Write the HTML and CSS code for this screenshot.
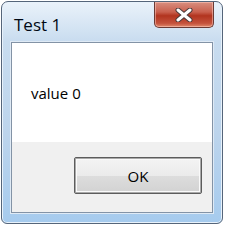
FILE: index.html
```html
<!DOCTYPE html>
<html lang="en">
<head>
    <meta charset="UTF-8">
    <title>Test 1</title>
    <link rel="stylesheet" href="styles.css">
</head>
<body>
    <div class="window">
        <div class="titlebar">
            <span class="title">Test 1</span>
            <button class="close" aria-label="Close">
                <svg width="20" height="14" viewBox="0 0 20 14">
                    <path d="M4 2 L16 12 M16 2 L4 12" stroke="#4a3a3a" stroke-width="5" stroke-linecap="round"/>
                    <path d="M4 2 L16 12 M16 2 L4 12" stroke="#ffffff" stroke-width="3" stroke-linecap="round"/>
                </svg>
            </button>
        </div>
        <div class="client">
            <div class="message">value 0</div>
            <div class="footer">
                <button class="ok">OK</button>
            </div>
        </div>
    </div>
</body>
</html>
```

FILE: styles.css
```css
body {
    margin: 0;
    background: #ffffff;
    font-family: "Open Sans", "Noto Sans", sans-serif;
}
.window {
    box-sizing: border-box;
    width: 222px;
    height: 223px;
    margin: 1px 0 0 1px;
    border: 1px solid #55657a;
    border-radius: 7px 7px 6px 6px;
    background: linear-gradient(to bottom, #eaf2fa 0%, #c8dcef 18%, #bcd4ec 60%, #a6cbee 100%);
    box-shadow: inset 0 0 0 1px #e8f2fb;
    padding: 0 9px 10px 9px;
    display: flex;
    flex-direction: column;
}
.titlebar {
    height: 40px;
    display: flex;
    justify-content: space-between;
    align-items: flex-start;
}
.title {
    margin: 11px 0 0 3px;
    font-size: 17px;
    color: #000814;
}
.close {
    width: 60px;
    height: 26px;
    margin: 0 -1px 0 0;
    padding: 0;
    border: 1px solid #6b3a34;
    border-top: none;
    border-radius: 0 0 5px 5px;
    background: linear-gradient(to bottom, #d98f80 0%, #c9604e 40%, #b2341f 55%, #c4523c 85%, #e08a6c 100%);
    box-shadow: inset 0 0 0 1px rgba(255, 210, 200, 0.5);
    display: flex;
    align-items: center;
    justify-content: center;
}
.client {
    flex: 1;
    border: 1px solid #8393a6;
    box-shadow: 0 0 0 1px #dfeaf5;
    background: #ffffff;
    display: flex;
    flex-direction: column;
}
.message {
    height: 99px;
    display: flex;
    align-items: center;
    padding: 0 0 0 19px;
    font-size: 15px;
    color: #000000;
}
.footer {
    flex: 1;
    background: #f0f0f0;
    display: flex;
    justify-content: flex-end;
    align-items: flex-start;
    padding: 15px 10px 0 0;
}
.ok {
    width: 128px;
    height: 37px;
    border: 1px solid #5c5c5c;
    border-radius: 2px;
    background: linear-gradient(to bottom, #f4f4f4 0%, #ebebeb 50%, #dddddd 51%, #d2d2d2 100%);
    box-shadow: inset 0 0 0 1px #a9a9a9, inset 0 0 0 2px #fafafa;
    font-family: "Open Sans", "Noto Sans", sans-serif;
    font-size: 15px;
    color: #000000;
    padding: 0;
}
```
